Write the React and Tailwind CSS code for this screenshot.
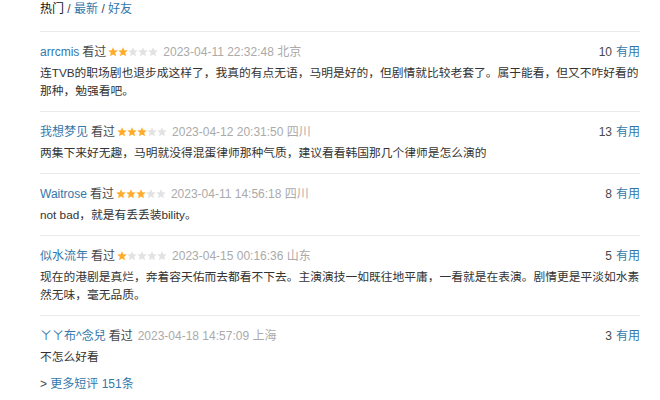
import React from 'react'

const comments = [
  {
    name: 'arrcmis',
    stars: 2,
    time: '2023-04-11 22:32:48',
    loc: '北京',
    votes: 10,
    text: '连TVB的职场剧也退步成这样了，我真的有点无语，马明是好的，但剧情就比较老套了。属于能看，但又不咋好看的那种，勉强看吧。',
  },
  {
    name: '我想梦见',
    stars: 3,
    time: '2023-04-12 20:31:50',
    loc: '四川',
    votes: 13,
    text: '两集下来好无趣，马明就没得混蛋律师那种气质，建议看看韩国那几个律师是怎么演的',
  },
  {
    name: 'Waitrose',
    stars: 3,
    time: '2023-04-11 14:56:18',
    loc: '四川',
    votes: 8,
    text: 'not bad，就是有丢丢装bility。',
  },
  {
    name: '似水流年',
    stars: 1,
    time: '2023-04-15 00:16:36',
    loc: '山东',
    votes: 5,
    text: '现在的港剧是真烂，奔着容天佑而去都看不下去。主演演技一如既往地平庸，一看就是在表演。剧情更是平淡如水素然无味，毫无品质。',
  },
  {
    name: 'ㄚㄚ布^念兒',
    stars: 0,
    time: '2023-04-18 14:57:09',
    loc: '上海',
    votes: 3,
    text: '不怎么好看',
  },
]

function Star({ on }) {
  return (
    <svg width="10" height="10" viewBox="0 0 10 10" className="block">
      <polygon
        points="5,0.2 6.3,3.3 9.8,3.6 7.2,5.8 8,9.3 5,7.4 2,9.3 2.8,5.8 0.2,3.6 3.7,3.3"
        fill={on ? '#ffac2d' : '#e2e2e2'}
      />
    </svg>
  )
}

function Stars({ n }) {
  return (
    <span className="inline-flex items-center ml-[2px]">
      {[0, 1, 2, 3, 4].map((i) => (
        <Star key={i} on={i < n} />
      ))}
    </span>
  )
}

function Comment({ c }) {
  return (
    <div className="border-t border-[#eaeaea] pt-[11px] pb-[11px]">
      <div className="flex items-center justify-between leading-[18px]">
        <div className="flex items-center">
          <span className="text-[#37a]">{c.name}</span>
          <span className="text-[#494949] ml-[3px]">看过</span>
          {c.stars > 0 && <Stars n={c.stars} />}
          <span className="text-[#aaa] ml-[5px]">
            {c.time} {c.loc}
          </span>
        </div>
        <div>
          <span className="text-[#494949]">{c.votes}</span>
          <span className="text-[#37a] ml-[4px]">有用</span>
        </div>
      </div>
      <p className="mt-[3px] leading-[18px] text-[11.75px] text-[#333] break-all">{c.text}</p>
    </div>
  )
}

export default function App() {
  return (
    <div className="w-[660px] h-[400px] bg-white overflow-hidden font-['Liberation_Sans','Noto_Sans_CJK_SC',sans-serif] text-[12px]">
      <div className="ml-[40px] w-[600px]">
        <div className="leading-[18px] pb-[13px]">
          <span className="text-[#111]">热门</span>
          <span className="text-[#494949]"> / </span>
          <span className="text-[#37a]">最新</span>
          <span className="text-[#494949]"> / </span>
          <span className="text-[#37a]">好友</span>
        </div>
        {comments.map((c) => (
          <Comment key={c.name} c={c} />
        ))}
        <div className="leading-[18px] mt-[-2px]">
          <span className="text-[#494949]">&gt; </span>
          <span className="text-[#37a]">更多短评 151条</span>
        </div>
      </div>
    </div>
  )
}
